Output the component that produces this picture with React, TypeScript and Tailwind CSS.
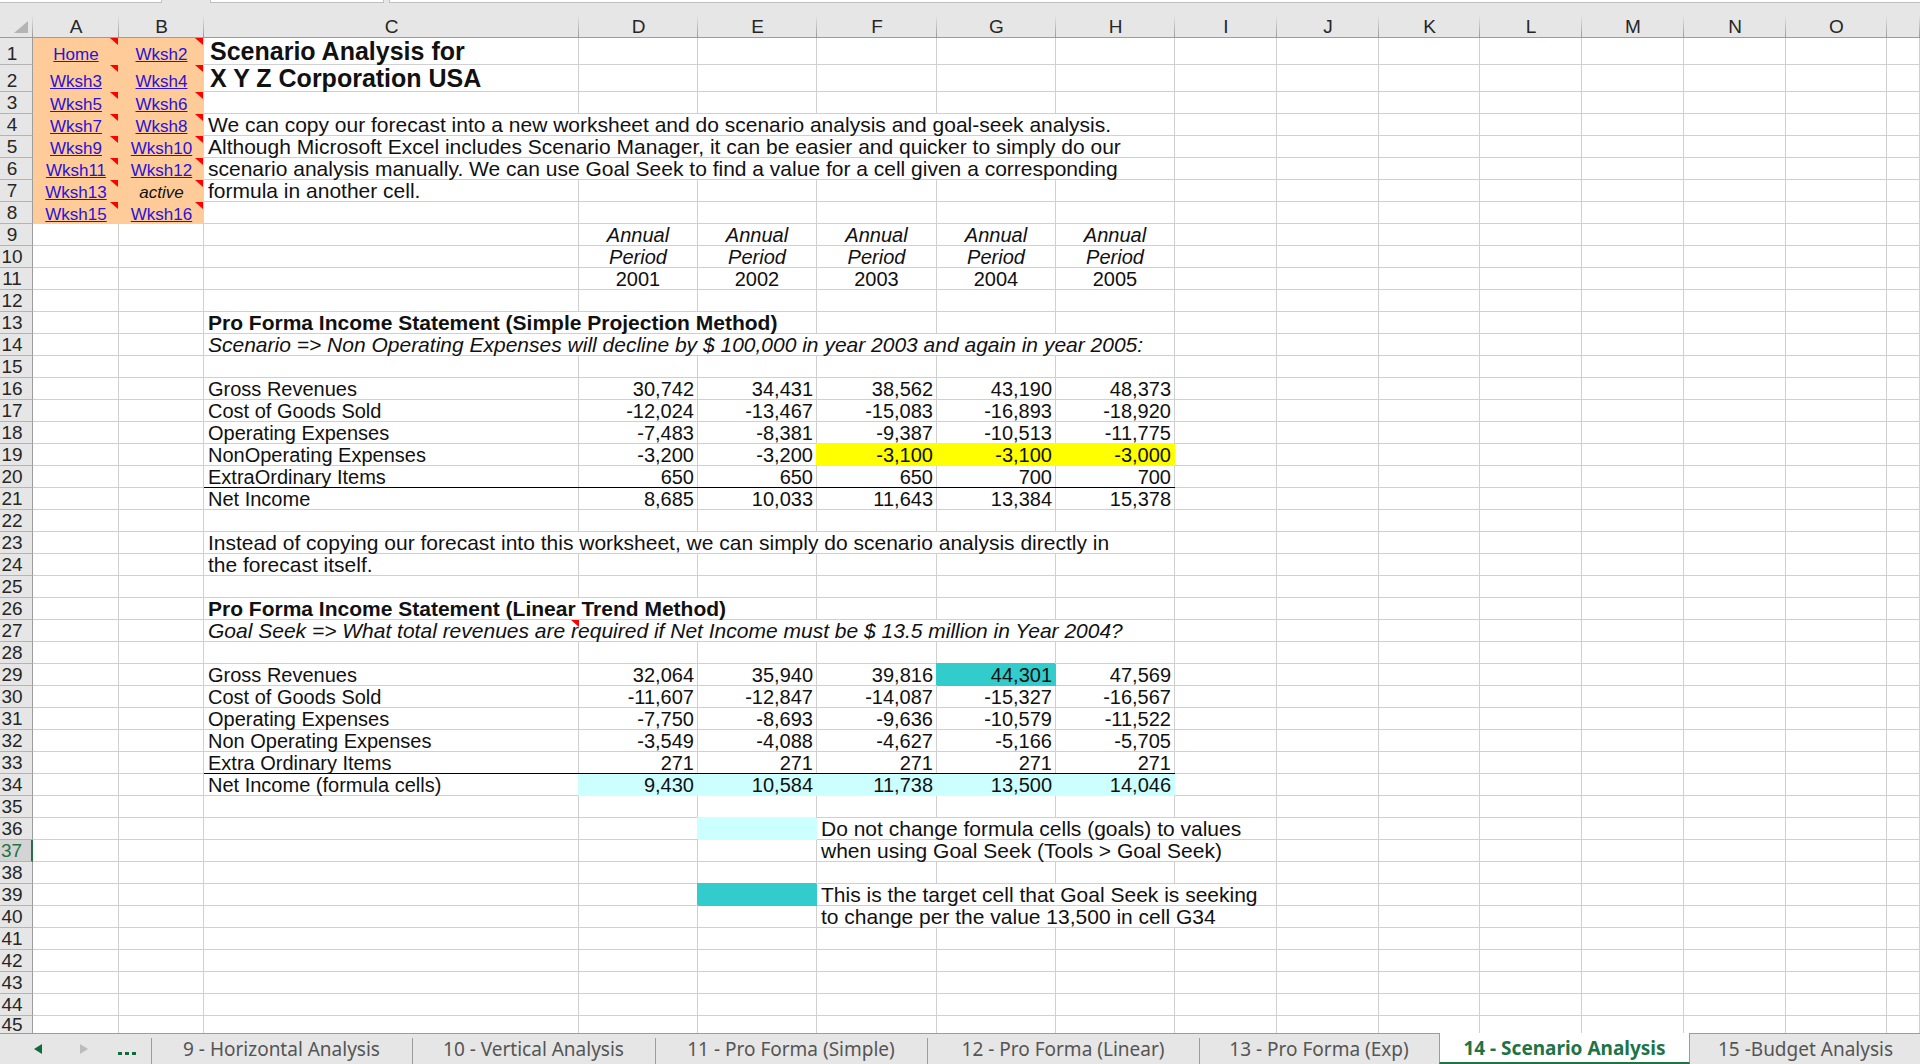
import { useState } from 'react'
import type { ReactNode } from 'react'

type Kind = 'text' | 'label' | 'title' | 'bold' | 'italic' | 'center' | 'centerItalic' | 'num'
type Fill = 'yellow' | 'teal' | 'cyan' | 'cyanTotal'

interface Cell {
  col: string
  text?: string
  kind?: Kind
  span?: number
  fill?: Fill
  note?: boolean
}

const COLUMNS = [
  { name: 'A', width: 'w-[86px]' },
  { name: 'B', width: 'w-[85px]' },
  { name: 'C', width: 'w-[375px]' },
  { name: 'D', width: 'w-[119px]' },
  { name: 'E', width: 'w-[119px]' },
  { name: 'F', width: 'w-[120px]' },
  { name: 'G', width: 'w-[119px]' },
  { name: 'H', width: 'w-[119px]' },
  { name: 'I', width: 'w-[102px]' },
  { name: 'J', width: 'w-[102px]' },
  { name: 'K', width: 'w-[101px]' },
  { name: 'L', width: 'w-[102px]' },
  { name: 'M', width: 'w-[102px]' },
  { name: 'N', width: 'w-[102px]' },
  { name: 'O', width: 'w-[101px]' },
  { name: '', width: '' },
]

const YEARS = ['D', 'E', 'F', 'G', 'H']

const KINDS: Record<Kind, string> = {
  text: 'pl-1 text-left text-[21px]',
  label: 'pl-1 text-left text-[20px]',
  title: 'pb-[3px] pl-[6px] text-left text-[25px] font-bold',
  bold: 'pl-1 text-left text-[21px] font-bold',
  italic: 'pl-1 text-left text-[21px] italic',
  center: 'text-center text-[20px]',
  centerItalic: 'text-center text-[20px] italic',
  num: 'pr-[3px] text-right text-[20px]',
}

const FILLS: Record<Fill, string> = {
  yellow: 'border-transparent bg-[#ffff00] shadow-[-1px_-1px_0_0_#ffff00]',
  teal: 'border-transparent bg-[#33cccc] shadow-[-1px_-1px_0_0_#33cccc]',
  cyan: 'border-transparent bg-[#ccffff] shadow-[-1px_-1px_0_0_#ccffff]',
  cyanTotal: 'border-transparent bg-[#ccffff] shadow-[0_-1px_0_0_#000000,-1px_0_0_0_#ccffff]',
}

const LINKS = [
  ['Home', 'Wksh2'],
  ['Wksh3', 'Wksh4'],
  ['Wksh5', 'Wksh6'],
  ['Wksh7', 'Wksh8'],
  ['Wksh9', 'Wksh10'],
  ['Wksh11', 'Wksh12'],
  ['Wksh13', 'active'],
  ['Wksh15', 'Wksh16'],
]

const LAST_ROW = 45

// Totals rows: a black rule runs along the top of cells C to H
const TOTALS = [21, 34]

function across(values: string[], kind: Kind, fills: (Fill | undefined)[] = []): Cell[] {
  return values.map((text, i) => ({ col: YEARS[i], text, kind, fill: fills[i] }))
}

function line(label: string, values: string, fills: (Fill | undefined)[] = []): Cell[] {
  return [{ col: 'C', text: label, kind: 'label' }, ...across(values.split(' '), 'num', fills)]
}

const CELLS: Record<number, Cell[]> = {
  1: [{ col: 'C', text: 'Scenario Analysis for', kind: 'title' }],
  2: [{ col: 'C', text: 'X Y Z Corporation USA', kind: 'title' }],
  4: [{ col: 'C', span: 6, text: 'We can copy our forecast into a new worksheet and do scenario analysis and goal-seek analysis.' }],
  5: [{ col: 'C', span: 6, text: 'Although Microsoft Excel includes Scenario Manager, it can be easier and quicker to simply do our' }],
  6: [{ col: 'C', span: 6, text: 'scenario analysis manually. We can use Goal Seek to find a value for a cell given a corresponding' }],
  7: [{ col: 'C', text: 'formula in another cell.' }],
  9: across(['Annual', 'Annual', 'Annual', 'Annual', 'Annual'], 'centerItalic'),
  10: across(['Period', 'Period', 'Period', 'Period', 'Period'], 'centerItalic'),
  11: across(['2001', '2002', '2003', '2004', '2005'], 'center'),
  13: [{ col: 'C', span: 3, text: 'Pro Forma Income Statement (Simple Projection Method)', kind: 'bold' }],
  14: [{ col: 'C', span: 6, text: 'Scenario => Non Operating Expenses will decline by $ 100,000 in year 2003 and again in year 2005:', kind: 'italic' }],
  16: line('Gross Revenues', '30,742 34,431 38,562 43,190 48,373'),
  17: line('Cost of Goods Sold', '-12,024 -13,467 -15,083 -16,893 -18,920'),
  18: line('Operating Expenses', '-7,483 -8,381 -9,387 -10,513 -11,775'),
  19: line('NonOperating Expenses', '-3,200 -3,200 -3,100 -3,100 -3,000', [undefined, undefined, 'yellow', 'yellow', 'yellow']),
  20: line('ExtraOrdinary Items', '650 650 650 700 700'),
  21: line('Net Income', '8,685 10,033 11,643 13,384 15,378'),
  23: [{ col: 'C', span: 6, text: 'Instead of copying our forecast into this worksheet, we can simply do scenario analysis directly in' }],
  24: [{ col: 'C', text: 'the forecast itself.' }],
  26: [{ col: 'C', span: 3, text: 'Pro Forma Income Statement (Linear Trend Method)', kind: 'bold' }],
  27: [{ col: 'C', span: 6, text: 'Goal Seek => What total revenues are required if Net Income must be $ 13.5 million in Year 2004?', kind: 'italic', note: true }],
  29: line('Gross Revenues', '32,064 35,940 39,816 44,301 47,569', [undefined, undefined, undefined, 'teal']),
  30: line('Cost of Goods Sold', '-11,607 -12,847 -14,087 -15,327 -16,567'),
  31: line('Operating Expenses', '-7,750 -8,693 -9,636 -10,579 -11,522'),
  32: line('Non Operating Expenses', '-3,549 -4,088 -4,627 -5,166 -5,705'),
  33: line('Extra Ordinary Items', '271 271 271 271 271'),
  34: line('Net Income (formula cells)', '9,430 10,584 11,738 13,500 14,046', ['cyanTotal', 'cyanTotal', 'cyanTotal', 'cyanTotal', 'cyanTotal']),
  36: [
    { col: 'E', fill: 'cyan' },
    { col: 'F', span: 4, text: 'Do not change formula cells (goals) to values' },
  ],
  37: [{ col: 'F', span: 4, text: 'when using Goal Seek (Tools > Goal Seek)' }],
  39: [
    { col: 'E', fill: 'teal' },
    { col: 'F', span: 4, text: 'This is the target cell that Goal Seek is seeking' },
  ],
  40: [{ col: 'F', span: 4, text: 'to change per the value 13,500 in cell G34' }],
}

const TABS = [
  { name: '9 - Horizontal Analysis', width: 'w-[261px]' },
  { name: '10 - Vertical Analysis', width: 'w-[243px]' },
  { name: '11 - Pro Forma (Simple)', width: 'w-[272px]' },
  { name: '12 - Pro Forma (Linear)', width: 'w-[272px]' },
  { name: '13 - Pro Forma (Exp)', width: 'w-[240px]' },
  { name: '14 - Scenario Analysis', width: 'w-[251px]' },
  { name: '15 -Budget Analysis', width: 'w-[231px]' },
]

function NoteMark({ className = 'right-px' }: { className?: string }) {
  return (
    <svg viewBox="0 0 8 7" className={`absolute top-0 h-[7px] w-2 ${className}`} aria-hidden="true">
      <path d="M0 0h8v7z" fill="#ff0000" />
    </svg>
  )
}

function LinkCell({ text, tall }: { text: string; tall: boolean }) {
  return (
    <td
      className={[
        'relative bg-[#ffcc99] p-0 text-center align-bottom text-[17px] leading-[18px]',
        tall ? 'pb-px' : '',
      ].join(' ')}
    >
      {text === 'active' ? (
        <span className="italic">active</span>
      ) : (
        <a href={`#${text}`} className="text-[#2a12d6] underline">{text}</a>
      )}
      <NoteMark />
    </td>
  )
}

function Row({ n }: { n: number }) {
  const cells: ReactNode[] = []
  const link = LINKS[n - 1]
  const last = n === LAST_ROW
  let i = 0

  if (link) {
    cells.push(
      <LinkCell key="A" text={link[0]} tall={n < 3} />,
      <LinkCell key="B" text={link[1]} tall={n < 3} />,
    )
    i = 2
  }

  while (i < COLUMNS.length) {
    const name = COLUMNS[i].name
    const cell = CELLS[n]?.find((c) => c.col === name && name !== '')
    const total = TOTALS.includes(n) && i >= 2 && i <= 7
    cells.push(
      <td
        key={i}
        colSpan={cell?.span ?? 1}
        className={[
          'whitespace-nowrap border-r p-0 align-bottom leading-5',
          last ? '' : 'border-b',
          cell?.fill ? FILLS[cell.fill] : 'border-[#d0d0d0]',
          total && !cell?.fill ? 'shadow-[0_-1px_0_0_#000000]' : '',
          KINDS[cell?.kind ?? 'text'],
          cell?.note ? 'relative' : '',
        ].join(' ')}
      >
        {cell?.text}
        {cell?.note && <NoteMark className="left-[367px]" />}
      </td>,
    )
    i += cell?.span ?? 1
  }

  return (
    <tr className={n < 3 ? 'h-[27px]' : last ? 'h-[17px]' : 'h-[22px]'}>
      <th
        scope="row"
        className={[
          'p-0 pr-2 text-center align-bottom text-[19px] font-normal',
          last ? 'leading-[17px]' : 'border-b leading-[21px]',
          n === 37
            ? 'border-r-2 border-r-[#217346] border-b-[#b4b4b4] bg-[#d4d4d4] text-[#217346]'
            : 'border-r border-r-[#9c9c9c] border-b-[#b4b4b4] bg-[#e6e6e6] text-[#262626]',
        ].join(' ')}
      >
        {n}
      </th>
      {cells}
    </tr>
  )
}

function Sheet() {
  return (
    <table className="w-full table-fixed border-separate border-spacing-0 text-[#111111]">
      <colgroup>
        <col className="w-[33px]" />
        {COLUMNS.map((c, i) => <col key={i} className={c.width} />)}
      </colgroup>
      <thead>
        <tr className="h-[35px] bg-[#e6e6e6]">
          <th className="border-b border-[#9c9c9c] bg-[linear-gradient(to_bottom,#e6e6e6,#9c9c9c)] bg-[length:1px_22px] bg-right-bottom bg-no-repeat p-0 pr-[5px] pb-1 align-bottom">
            <svg viewBox="0 0 14 12" className="ml-auto h-3 w-[14px]" aria-label="Select all">
              <path d="M14 0v12H0z" fill="#b4b4b4" />
            </svg>
          </th>
          {COLUMNS.map((c, i) => (
            <th
              key={i}
              scope="col"
              className="border-b border-[#9c9c9c] bg-[linear-gradient(to_bottom,#e6e6e6,#9c9c9c)] bg-[length:1px_22px] bg-right-bottom bg-no-repeat p-0 align-bottom text-[19px] leading-[21px] font-normal text-[#262626]"
            >
              {c.name}
            </th>
          ))}
        </tr>
      </thead>
      <tbody>
        {Array.from({ length: LAST_ROW }, (_, i) => <Row key={i} n={i + 1} />)}
      </tbody>
    </table>
  )
}

function TabBar() {
  const [active, setActive] = useState('14 - Scenario Analysis')

  return (
    <nav className="flex h-[31px] shrink-0 bg-[#e6e6e6] font-['Noto_Sans',sans-serif] text-[19px] leading-7 text-[#555555]">
      <div className="flex w-[151px] shrink-0 items-center border-t border-[#9c9c9c] pl-[34px]">
        <button type="button" aria-label="Previous sheets" className="mr-[38px]">
          <svg viewBox="0 0 8 10" className="h-[10px] w-2"><path d="M8 0v10L0 5z" fill="#0f6b3d" /></svg>
        </button>
        <button type="button" aria-label="Next sheets" className="mr-[30px]">
          <svg viewBox="0 0 8 10" className="h-[10px] w-2"><path d="M0 0v10l8-5z" fill="#bcbcbc" /></svg>
        </button>
        <button type="button" aria-label="More sheets" className="pt-2">
          <svg viewBox="0 0 18 3" className="h-[3px] w-[18px]">
            <path d="M0 0h4v3H0zM7 0h4v3H7zM14 0h4v3h-4z" fill="#0f6b3d" />
          </svg>
        </button>
      </div>
      {TABS.map((t, i) => (
        <button
          key={t.name}
          type="button"
          onClick={() => setActive(t.name)}
          className={[
            'shrink-0 whitespace-nowrap text-center',
            t.width,
            t.name === active
              ? 'border-x border-b-2 border-x-[#9c9c9c] border-b-[#217346] bg-white pt-px font-bold text-[#217346]'
              : 'border-t border-[#9c9c9c] bg-[linear-gradient(#9c9c9c,#9c9c9c)] bg-[length:1px_26px] bg-no-repeat',
            i === TABS.length - 1 ? 'bg-none' : 'bg-left-bottom',
          ].join(' ')}
        >
          {t.name}
        </button>
      ))}
      <div className="grow border-t border-[#9c9c9c]" />
    </nav>
  )
}

export default function App() {
  return (
    <div className="flex h-screen flex-col overflow-hidden bg-white font-['Liberation_Sans',Arial,sans-serif]">
      {/* Lower edge of the name box and formula bar */}
      <div className="flex h-[3px] shrink-0 bg-[#e6e6e6]">
        <div className="mr-12 w-[162px] border-r border-b border-[#c0c0c0] bg-white" />
        <div className="mr-[5px] w-[174px] border-x border-b border-[#c0c0c0] bg-white" />
        <div className="grow border-b border-l border-[#c0c0c0] bg-white" />
      </div>
      <main className="min-h-0 grow overflow-hidden">
        <Sheet />
      </main>
      <TabBar />
    </div>
  )
}
